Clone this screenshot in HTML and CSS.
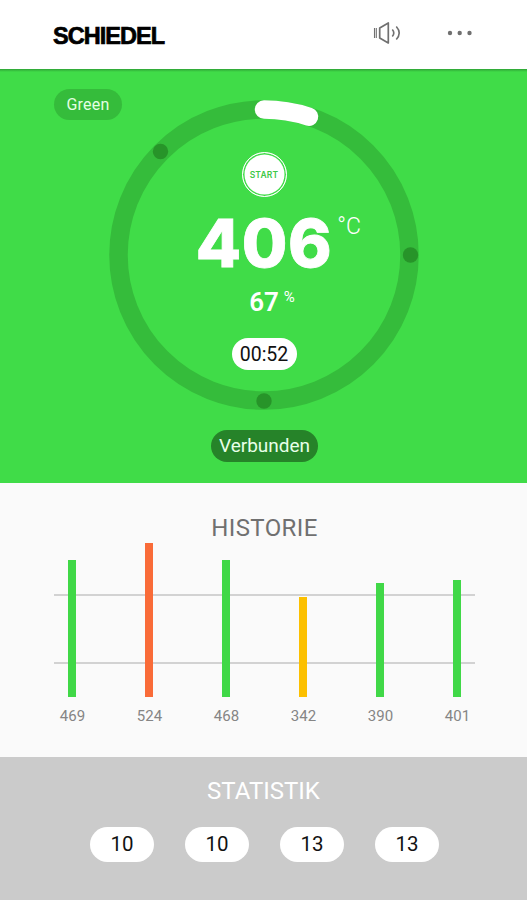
FILE: index.html
```html
<!DOCTYPE html>
<html lang="de">
<head>
    <meta charset="UTF-8">
    <meta name="viewport" content="width=device-width, initial-scale=1.0">
    <title>Schiedel</title>
    <link rel="stylesheet" href="styles.css">
</head>
<body>

    <header class="topbar">
        <div class="logo">SCHIEDEL</div>
        <div class="actions">
            <svg class="icon-sound" width="30" height="26" viewBox="0 0 30 26" fill="none" stroke="#707070">
                <path d="M1.500 8v10M3.300 8v10" stroke-width="1.100"/>
                <path d="M6.700 8 15.300 3v20L6.700 18z" stroke-width="1.700" stroke-linejoin="round"/>
                <path d="M19.300 9.500q3 3.500 0 7M23.300 6.500q5.800 6.500 0 13" stroke-width="1.600"/>
            </svg>
            <svg class="icon-more" width="26" height="6" viewBox="0 0 26 6" fill="#707070">
                <circle cx="3" cy="3" r="2.200"/>
                <circle cx="12.700" cy="3" r="2.200"/>
                <circle cx="22.500" cy="3" r="2.200"/>
            </svg>
        </div>
    </header>

    <!-- Temperatur -->
    <section class="status">
        <span class="mode">Green</span>
        <div class="dial">
            <svg class="ring" viewBox="0 0 310 310" fill="none">
                <circle cx="155" cy="155" r="145.500" stroke="#35bc3b" stroke-width="18.500"/>
                <circle cx="51.500" cy="51.500" r="7.700" fill="#279429"/>
                <circle cx="301.500" cy="155" r="7.700" fill="#279429"/>
                <circle cx="155" cy="301" r="7.700" fill="#279429"/>
                <path d="M155 9.500A145.500 145.500 0 0 1 200 16.700" stroke="#fff" stroke-width="18.500" stroke-linecap="round"/>
            </svg>
            <div class="readout">
                <button class="start">START</button>
                <div class="temp">
                    <span class="temp-value">406</span>
                    <span class="temp-unit">°C</span>
                </div>
                <div class="air">
                    <span class="air-value">67</span>
                    <span class="air-unit">%</span>
                </div>
                <div class="timer">00:52</div>
            </div>
        </div>
        <div class="connection">Verbunden</div>
    </section>

    <!-- Historie -->
    <section class="history">
        <h2>HISTORIE</h2>
        <div class="bars">
            <div class="bar green" style="height: 137.500px"></div>
            <div class="bar orange" style="height: 154px"></div>
            <div class="bar green" style="height: 137px"></div>
            <div class="bar yellow" style="height: 100px"></div>
            <div class="bar green" style="height: 114.500px"></div>
            <div class="bar green" style="height: 117px"></div>
        </div>
        <div class="labels">
            <span>469</span>
            <span>524</span>
            <span>468</span>
            <span>342</span>
            <span>390</span>
            <span>401</span>
        </div>
    </section>

    <!-- Statistik -->
    <section class="stats">
        <h2>STATISTIK</h2>
        <div class="pills">
            <span class="pill">10</span>
            <span class="pill">10</span>
            <span class="pill">13</span>
            <span class="pill">13</span>
        </div>
    </section>

</body>
</html>
```
FILE: styles.css
```css
* {
    margin: 0;
    padding: 0;
    box-sizing: border-box;
}

body {
    font-family: Roboto, "Liberation Sans", sans-serif;
    background-color: #fafafa;
    width: 527px;
    height: 900px;
    display: flex;
    flex-direction: column;
    overflow: hidden;
}

h2 {
    font-size: 24px;
    font-weight: 400;
    line-height: 28px;
    text-align: center;
}

/* Kopfzeile */
.topbar {
    height: 69px;
    padding: 0 54px 3px 53px;
    background: #fff;
    display: flex;
    align-items: center;
    justify-content: space-between;
}

.logo {
    font-family: "Liberation Sans", sans-serif;
    font-size: 23.5px;
    font-weight: 700;
    line-height: 28px;
    letter-spacing: -0.95px;
    margin-top: 5px;
    color: #000;
    -webkit-text-stroke: 0.7px #000;
}

.actions {
    display: flex;
    align-items: center;
    gap: 44px;
}

/* Temperatur */
.status {
    height: 413.5px;
    background: linear-gradient(#2fa336, #40dc48 3px);
    display: grid;
    grid-template-columns: 54px 1fr 54px;
    grid-template-rows: 31px 310px 21px 32px;
}

.mode {
    grid-area: 1 / 2 / 3 / 3;
    justify-self: start;
    align-self: start;
    width: 68px;
    height: 31px;
    margin-top: 20px;
    border-radius: 16px;
    background: #35bc3b;
    color: #e4ffe4;
    font-size: 16px;
    line-height: 32px;
    letter-spacing: 0.2px;
    text-align: center;
}

.dial {
    grid-area: 2 / 1 / 3 / 4;
    justify-self: center;
    width: 310px;
    height: 310px;
    display: grid;
    margin-left: 1px;
}

.ring,
.readout {
    grid-area: 1 / 1;
}

.readout {
    display: flex;
    flex-direction: column;
    align-items: center;
    padding-top: 52px;
    color: #fff;
}

.start {
    width: 45px;
    height: 45px;
    border: 1.5px solid #fff;
    border-radius: 50%;
    background: #fff;
    box-shadow: inset 0 0 0 1.5px #40dc48;
    color: #40c848;
    font-family: Inter, sans-serif;
    font-size: 8.5px;
    font-weight: 600;
    letter-spacing: 0.2px;
}

.temp,
.air {
    width: 100%;
    display: grid;
    grid-template-columns: 1fr auto 1fr;
}

.temp-value,
.air-value {
    grid-column: 2;
}

.temp {
    margin-top: 12px;
}

.temp-value {
    font-family: Inter, sans-serif;
    font-size: 66px;
    font-weight: 800;
    line-height: 68px;
    letter-spacing: 0.6px;
    -webkit-text-stroke: 0.8px #fff;
}

.temp-unit {
    font-size: 23px;
    font-weight: 300;
    line-height: 26px;
    margin: 5px 0 0 5px;
}

.air {
    margin-top: 10px;
}

.air-value {
    font-size: 26px;
    font-weight: 600;
    line-height: 30px;
}

.air-unit {
    font-size: 15px;
    line-height: 16px;
    margin: 2px 0 0 5px;
}

.timer {
    width: 65px;
    height: 32px;
    margin-top: 21px;
    border-radius: 16px;
    background: #fff;
    color: #111;
    font-size: 19.5px;
    line-height: 33px;
    text-align: center;
}

.connection {
    grid-area: 4 / 1 / 5 / 4;
    justify-self: center;
    width: 107px;
    height: 32px;
    margin: -1px 0 0 2px;
    border-radius: 16px;
    background: #268329;
    color: #e8ffe8;
    font-size: 19px;
    line-height: 32px;
    text-align: center;
}

/* Historie */
.history {
    height: 274px;
    padding: 31.5px 31px 0 33px;
}

.history h2 {
    color: #707070;
    letter-spacing: 0.4px;
}

.bars,
.labels {
    display: grid;
    grid-template-columns: repeat(6, 1fr);
    justify-items: center;
}

.bars {
    height: 155px;
    align-items: end;
    background:
        linear-gradient(#d2d2d2, #d2d2d2) 21px 52px / 421px 2px no-repeat,
        linear-gradient(#d2d2d2, #d2d2d2) 21px 120px / 421px 2px no-repeat;
}

.bar {
    width: 8px;
}

.green {
    background: #40d847;
}

.orange {
    background: #f96b38;
}

.yellow {
    background: #fcc000;
}

.labels {
    margin: 10px 0 0 1px;
    color: #858585;
    font-size: 15px;
    line-height: 18px;
}

/* Statistik */
.stats {
    flex: 1;
    padding-top: 20.5px;
    background: #cbcbcb;
}

.stats h2 {
    color: #fff;
}

.pills {
    display: flex;
    justify-content: center;
    gap: 31px;
    margin: 22px 0 0 2px;
}

.pill {
    width: 64px;
    height: 35px;
    border-radius: 18px;
    background: #fff;
    color: #111;
    font-size: 20.5px;
    line-height: 35px;
    text-align: center;
}
```
